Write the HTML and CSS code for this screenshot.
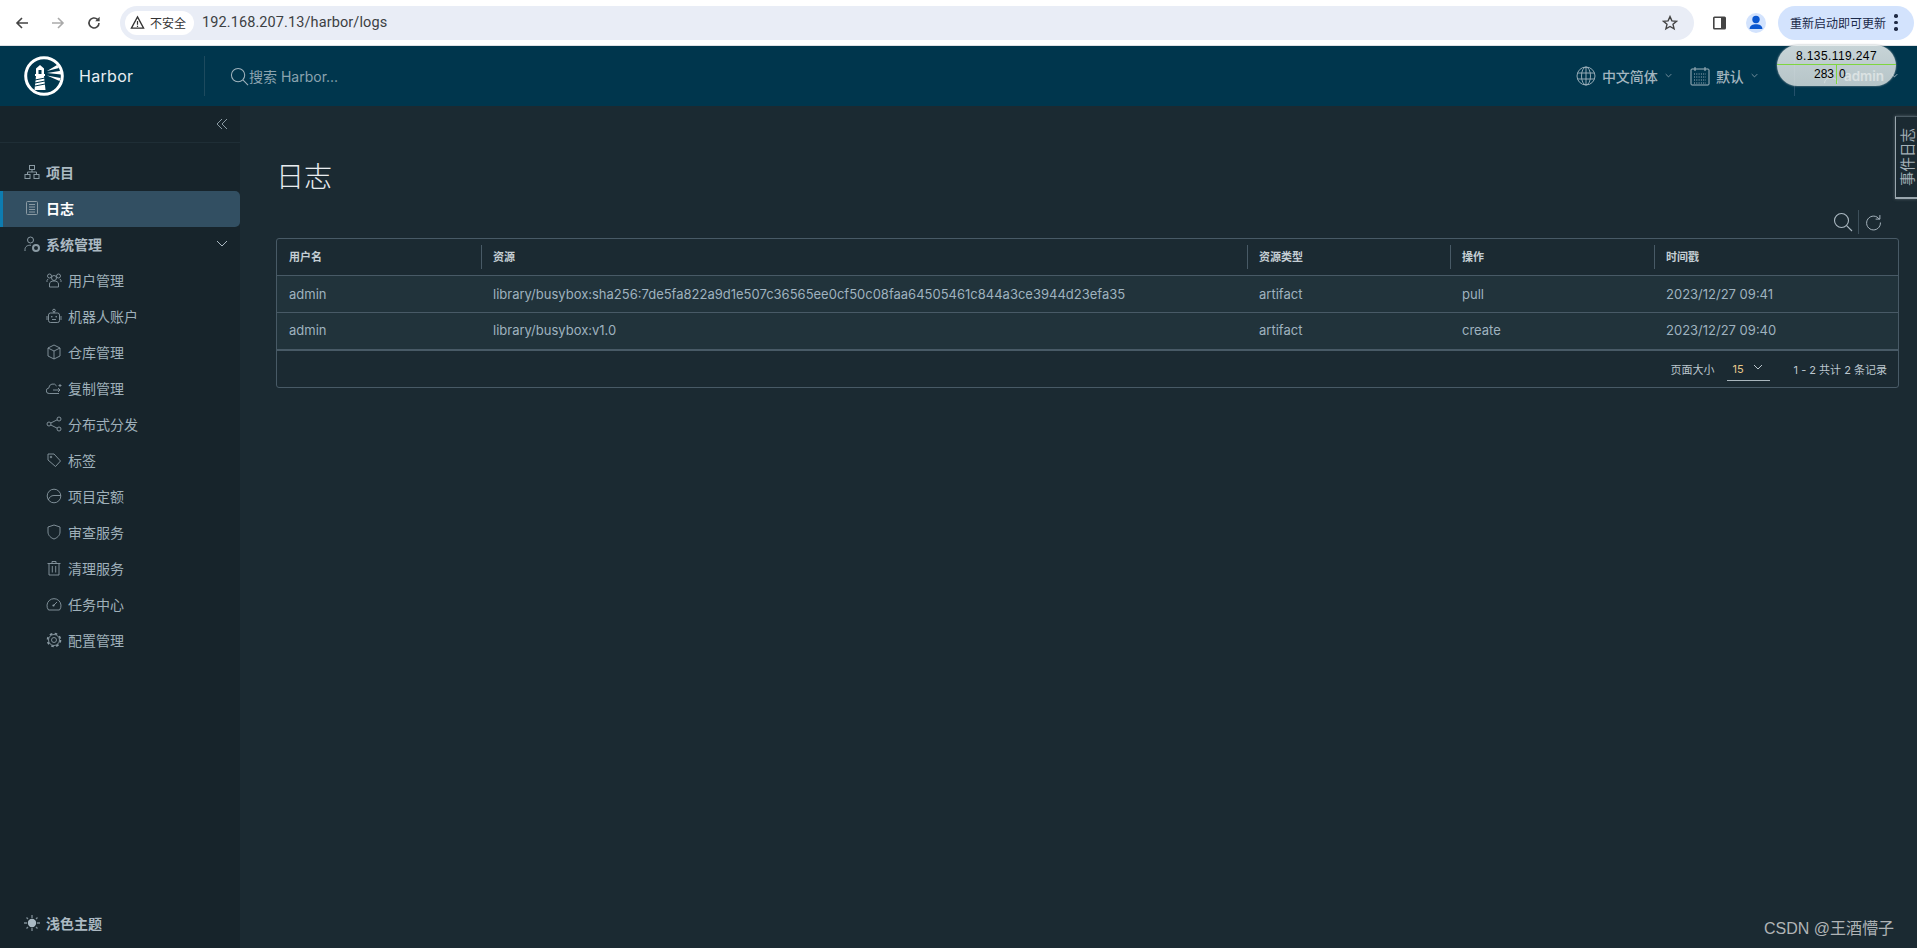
FILE: index.html
```html
<!DOCTYPE html>
<html lang="zh">
<head>
<meta charset="utf-8">
<title>Harbor</title>
<link rel="stylesheet" href="styles.css">
</head>
<body>
<svg width="0" height="0" class="defs">
<symbol id="chev" viewBox="0 0 10 6"><path d="M1 1l4 4 4-4" fill="none" stroke="currentColor" stroke-width="1"/></symbol>
<symbol id="search" viewBox="0 0 20 20"><circle cx="8.5" cy="8.5" r="7" fill="none" stroke="currentColor" stroke-width="1.1"/><path d="M13.6 13.6l5.4 5.4" stroke="currentColor" stroke-width="1.1"/></symbol>
</svg>
<div class="chrome">
  <svg class="nav" viewBox="0 0 16 16"><path d="M14 8H3M8 3L3 8l5 5" fill="none" stroke="#444" stroke-width="1.6"/></svg>
  <svg class="nav" viewBox="0 0 16 16"><path d="M2 8h11M8 3l5 5-5 5" fill="none" stroke="#aaa" stroke-width="1.6"/></svg>
  <svg class="nav nav-last" viewBox="0 0 16 16"><path d="M13 8a5 5 0 1 1-1.500-3.600" fill="none" stroke="#444" stroke-width="1.6"/><path d="M13.600 1.800v4.400H9.200z" fill="#444"/></svg>
  <div class="omnibox">
    <span class="chip"><svg class="warn" viewBox="0 0 16 16"><path d="M8 2l6.500 12h-13z" fill="none" stroke="#333" stroke-width="1.4"/><path d="M8 6.500v4M8 11.500v1.300" stroke="#333" stroke-width="1.3"/></svg>不安全</span>
    <span class="url">192.168.207.13/harbor/logs</span>
    <svg class="star" viewBox="0 0 16 16"><path d="M8 1.600l1.900 4.300 4.600.4-3.500 3 1.100 4.600L8 11.500l-4.100 2.400L5 9.300l-3.500-3 4.600-.4z" fill="none" stroke="#444" stroke-width="1.4"/></svg>
  </div>
  <svg class="sidepanel" viewBox="0 0 16 16"><rect x="1" y="1.500" width="13" height="13" rx="1.500" fill="#444"/><rect x="2.600" y="3" width="6.400" height="10" fill="#fff"/></svg>
  <span class="avatar"><svg viewBox="0 0 20 20"><circle cx="10" cy="6.500" r="3.700" fill="#0b57d0"/><path d="M3.600 16c0-3.400 3.200-4.800 6.400-4.800s6.400 1.400 6.400 4.800z" fill="#0b57d0"/></svg></span>
  <span class="update">重新启动即可更新<span class="dots"><i></i><i></i><i></i></span></span>
</div>
<header class="topbar">
  <div class="brand">
    <svg class="logo" viewBox="0 0 40 40">
      <circle cx="20" cy="20" r="18.300" fill="none" stroke="#fff" stroke-width="3"/>
      <path d="M16 9l4 3.500V18h1v2h-1l1.500 14h-11L12 20h-1v-2h1v-5.500z" fill="#fff"/>
      <rect x="14.500" y="14" width="3" height="4" fill="#00364d"/>
      <path d="M11 24l10-2M11 27l10-2M11 30l10-2" stroke="#00364d" stroke-width="1"/>
      <path d="M23 15L33 9l2 3zM23 17l14-2.200v3.700zM23 19.500l13.500 2.500-1 3z" fill="#fff"/>
    </svg>
    <span class="brand-name">Harbor</span>
  </div>
  <div class="global-search"><svg class="search-ico"><use href="#search"/></svg><span>搜索 Harbor...</span></div>
  <div class="top-right">
    <span class="top-item"><svg class="ico-lang" viewBox="0 0 20 20"><g fill="none" stroke="currentColor" stroke-width=".9"><circle cx="10" cy="10" r="9"/><ellipse cx="10" cy="10" rx="4.500" ry="9"/><path d="M10 1v18M1.500 7h17M1.500 13h17"/></g></svg>中文简体<svg class="chev"><use href="#chev"/></svg></span>
    <span class="top-item"><svg class="ico-lang" viewBox="0 0 20 20"><g fill="none" stroke="currentColor" stroke-width="1"><rect x="1" y="3" width="18" height="16" rx="1"/><path d="M5 1v4M15 1v4"/><path d="M4 8h12M4 11h12M4 14h12M4 17h12" stroke-dasharray="1 1.300"/></g></svg>默认<svg class="chev"><use href="#chev"/></svg></span>
    <span class="top-sep"></span>
    <span class="top-item user"><svg class="ico-user" viewBox="0 0 20 20"><g fill="none" stroke="currentColor" stroke-width="1"><circle cx="10" cy="6" r="4"/><path d="M2 19c0-5 4-6.500 8-6.500s8 1.500 8 6.500"/></g></svg>admin<svg class="chev"><use href="#chev"/></svg></span>
  </div>
</header>
<div class="main">
  <aside class="sidebar">
    <div class="collapse"><svg viewBox="0 0 12 12"><path d="M6 1L1 6l5 5M11 1L6 6l5 5" fill="none" stroke="currentColor" stroke-width="1"/></svg></div>
    <nav class="menu">
      <a class="item"><svg class="ic" viewBox="0 0 16 16"><g fill="none" stroke="currentColor"><rect x="5.500" y="1.500" width="5" height="4"/><rect x="1" y="10.500" width="5" height="4"/><rect x="10" y="10.500" width="5" height="4"/><path d="M8 5.500V8M3.500 10.500V8h9v2.500"/></g></svg>项目</a>
      <a class="item active"><svg class="ic" viewBox="0 0 16 16"><g fill="none" stroke="currentColor"><rect x="2.500" y="1.500" width="11" height="13" rx="1"/><path d="M5 4.500h6M5 7h6M5 9.500h6M5 12h6"/></g></svg>日志</a>
      <a class="item"><svg class="ic" viewBox="0 0 16 16"><g fill="none" stroke="currentColor"><circle cx="6.500" cy="4" r="3"/><path d="M1 15v-1.500c0-3 2.500-4.500 6-4.300"/></g><circle cx="12" cy="12" r="3" fill="none" stroke="currentColor" stroke-width="2"/></svg>系统管理<svg class="chev-down" viewBox="0 0 12 8"><path d="M1 1l5 5 5-5" fill="none" stroke="currentColor" stroke-width="1"/></svg></a>
      <a class="item sub"><svg class="ic" viewBox="0 0 16 16"><g fill="none" stroke="currentColor" stroke-width=".9"><circle cx="8" cy="6" r="2.500"/><circle cx="3.500" cy="4" r="2"/><circle cx="12.500" cy="4" r="2"/><path d="M3.500 15v-3c0-2 2-3 4.500-3s4.500 1 4.500 3v3zM1 10V8.500L2 7M15 10V8.500L14 7"/></g></svg>用户管理</a>
      <a class="item sub"><svg class="ic" viewBox="0 0 16 16"><g fill="none" stroke="currentColor" stroke-width=".9"><rect x="2.500" y="5" width="11" height="9.500" rx="2"/><circle cx="8" cy="2.500" r="1.300"/><path d="M8 3.800V5M1 8v4M15 8v4M6 11.500h4"/></g><circle cx="5.800" cy="8.800" r=".8" fill="currentColor"/><circle cx="10.200" cy="8.800" r=".8" fill="currentColor"/></svg>机器人账户</a>
      <a class="item sub"><svg class="ic" viewBox="0 0 16 16"><g fill="none" stroke="currentColor" stroke-width=".9"><path d="M8 1l6 3v8l-6 3-6-3V4z"/><path d="M2 4l6 3 6-3M8 7v8"/></g></svg>仓库管理</a>
      <a class="item sub"><svg class="ic" viewBox="0 0 16 16"><g fill="none" stroke="currentColor" stroke-width=".9"><path d="M13 13.500H3.200A2.700 2.700 0 0 1 2.800 8.100 4.200 4.200 0 0 1 10.600 6"/><path d="M7 10h7M12 8l2 2-2 2M15.500 5.500h-3M14 4v3"/></g></svg>复制管理</a>
      <a class="item sub"><svg class="ic" viewBox="0 0 16 16"><g fill="none" stroke="currentColor" stroke-width=".9"><circle cx="3" cy="8" r="2"/><circle cx="13" cy="3" r="2"/><circle cx="13" cy="13" r="2"/><path d="M4.800 7l6.400-3.200M4.800 9l6.400 3.200"/></g></svg>分布式分发</a>
      <a class="item sub"><svg class="ic" viewBox="0 0 16 16"><g fill="none" stroke="currentColor" stroke-width=".9"><path d="M2 2h6l6.500 7-5 5.500L2 8z"/><circle cx="5" cy="5" r=".8"/></g></svg>标签</a>
      <a class="item sub"><svg class="ic" viewBox="0 0 16 16"><g fill="none" stroke="currentColor" stroke-width=".9"><circle cx="8" cy="8" r="6.800"/><path d="M2.200 12C3.500 9 5 7.500 8 7.500h6.800"/></g></svg>项目定额</a>
      <a class="item sub"><svg class="ic" viewBox="0 0 16 16"><path d="M8 1l6 2v5c0 3.500-3 6-6 7-3-1-6-3.500-6-7V3z" fill="none" stroke="currentColor" stroke-width=".9"/></svg>审查服务</a>
      <a class="item sub"><svg class="ic" viewBox="0 0 16 16"><g fill="none" stroke="currentColor" stroke-width=".9"><path d="M1.500 3.500h13M6 3.500V1.500h4v2M3 3.500V15h10V3.500M6.300 6v6.500M9.700 6v6.500"/></g></svg>清理服务</a>
      <a class="item sub"><svg class="ic" viewBox="0 0 16 16"><g fill="none" stroke="currentColor" stroke-width=".9"><path d="M2.500 14A7 7 0 1 1 13.500 14z"/><path d="M7.500 9.500L11 6"/></g><circle cx="7.500" cy="9.500" r="1.100" fill="currentColor"/></svg>任务中心</a>
      <a class="item sub"><svg class="ic" viewBox="0 0 16 16"><g fill="none" stroke="currentColor"><circle cx="8" cy="8" r="2.500" stroke-width=".9"/><circle cx="8" cy="8" r="5.500" stroke-width=".9"/><circle cx="8" cy="8" r="6.500" stroke-width="1.600" stroke-dasharray="2.600 2.500"/></g></svg>配置管理</a>
    </nav>
    <a class="item theme"><svg class="ic" viewBox="0 0 16 16"><circle cx="8" cy="8" r="4.200" fill="#a9b9c3"/><path d="M8 0v3M8 13v3M0 8h3M13 8h3M2.500 2.500l1.500 1.500M12 12l1.500 1.500M2.500 13.500L4 12M12 4l1.500-1.500" stroke="#7d8c95" stroke-width="1.300"/></svg>浅色主题</a>
  </aside>
  <main class="content">
    <h1 class="title">日志</h1>
    <div class="tools">
      <svg class="tool-search"><use href="#search"/></svg>
      <span class="tool-sep"></span>
      <svg class="tool-refresh" viewBox="0 0 16 16"><path d="M13.500 5A6.500 6.500 0 1 0 14.500 8" fill="none" stroke="currentColor" stroke-width=".9"/><path d="M10 4.800h4V1" fill="none" stroke="currentColor" stroke-width=".9"/></svg>
    </div>
    <section class="grid">
      <div class="row head"><span>用户名</span><span>资源</span><span>资源类型</span><span>操作</span><span>时间戳</span></div>
      <div class="row body"><span>admin</span><span>library/busybox:sha256:7de5fa822a9d1e507c36565ee0cf50c08faa64505461c844a3ce3944d23efa35</span><span>artifact</span><span>pull</span><span>2023/12/27 09:41</span></div>
      <div class="row body last"><span>admin</span><span>library/busybox:v1.0</span><span>artifact</span><span>create</span><span>2023/12/27 09:40</span></div>
      <div class="foot"><span>页面大小</span><span class="select">15<svg class="chev"><use href="#chev"/></svg></span><span class="count">1 - 2 共计 2 条记录</span></div>
    </section>
  </main>
</div>
<div class="speed">
  <div class="speed-top">8.135.119.247</div>
  <div class="speed-bottom"><span>283</span><span>0</span></div>
</div>
<div class="event-tab"><span>事件日志</span></div>
<div class="watermark">CSDN @王酒懵子</div>
</body>
</html>
```
FILE: styles.css
```css
* { box-sizing: border-box; }
html, body { margin: 0; height: 100%; overflow: hidden; }
body {
  width: 1917px; height: 948px; display: flex; flex-direction: column;
  background: #1b2a32; color: #acbac3;
  font-family: Inter, "Noto Sans CJK SC", sans-serif; font-size: 13px;
}
.defs { position: absolute; }
.chrome {
  height: 46px; flex: none; display: flex; align-items: center; background: #fff;
  border-bottom: 1px solid #dfe1e5; padding: 0 3px 0 14px;
}
.nav { width: 16px; height: 16px; margin-right: 20px; flex: none; }
.nav-last { margin-right: 18px; }
.omnibox {
  flex: 1; height: 34px; display: flex; align-items: center; background: #e9edf6;
  border-radius: 17px; padding: 0 12px 0 5px;
}
.chip {
  display: flex; align-items: center; gap: 5px; height: 24px; padding: 0 8px 0 5px; background: #fff;
  border-radius: 12px; font: 12px "Noto Sans CJK SC", sans-serif; color: #333;
}
.warn { width: 15px; height: 15px; }
.url { flex: 1; margin-left: 8px; font: 14.500px Roboto, sans-serif; color: #3c4043; letter-spacing: .1px; }
.star { width: 16px; height: 16px; margin-right: 4px; }
.sidepanel { width: 16px; height: 16px; margin-left: 18px; }
.avatar {
  width: 20px; height: 20px; margin: 0 12px 0 18px; border-radius: 50%; background: #d3e3fd; display: flex;
}
.update {
  display: flex; align-items: center; height: 34px; width: 136px; padding-left: 12px; background: #d3e3fd;
  border-radius: 17px; font: 12px "Noto Sans CJK SC", sans-serif; color: #1b2a4a;
}
.dots { display: flex; flex-direction: column; gap: 3px; margin-left: 8px; }
.dots i { width: 3.500px; height: 3.500px; border-radius: 50%; background: #1f2a44; }
.topbar {
  height: 60px; flex: none; display: flex; align-items: center; background: #00364d;
}
.brand { width: 205px; height: 40px; display: flex; align-items: center; padding-left: 24px; border-right: 1px solid #1d4a5e; flex: none; }
.logo { width: 40px; height: 40px; flex: none; }
.brand-name { margin-left: 15px; font-size: 16px; letter-spacing: .3px; color: #e8eef1; }
.global-search { display: flex; align-items: center; margin-left: 25px; color: #8ba3af; font-size: 14px; }
.search-ico { width: 19px; height: 19px; margin-right: 0; color: #9fb3bd; }
.top-right { margin-left: auto; display: flex; align-items: center; padding-right: 19px; color: #a3b5bf; }
.top-item { display: flex; align-items: center; font-size: 14px; font-weight: 500; margin-right: 18px; padding-bottom: 1px; }
.ico-lang { width: 20px; height: 20px; margin-right: 6px; flex: none; }
.ico-user { width: 16px; height: 16px; margin-right: 5px; flex: none; }
.chev { width: 7px; height: 5px; margin-left: 7px; flex: none; }
.top-sep { width: 1px; height: 40px; background: #24506a; margin: 0 28px 0 18px; }
.user { margin-right: 0; color: #e3eaee; font-weight: 600; font-size: 13.500px; }
.main { flex: 1; display: flex; min-height: 0; }
.sidebar { width: 240px; flex: none; background: #17242b; display: flex; flex-direction: column; }
.collapse { height: 37px; flex: none; border-bottom: 1px solid #1f2e36; display: flex; justify-content: flex-end; align-items: center; padding: 0 12px 1px 0; color: #8a9aa3; }
.collapse svg { width: 12px; height: 12px; }
.menu { flex: 1; padding-top: 12px; }
.item {
  display: flex; align-items: center; height: 36px; padding: 0 0 2px 24px; font-size: 14px; font-weight: 600;
  color: #acbac3; position: relative;
}
.ic { width: 16px; height: 16px; margin-right: 6px; flex: none; color: #8a9aa3; }
.item.active { background: #324f62; color: #fff; font-weight: 700; border-radius: 0 5px 5px 0; box-shadow: inset 3px 0 0 #0d7cb0; }
.item.sub { padding-left: 46px; font-weight: 400; color: #9fb0ba; }
.chev-down { width: 12px; height: 8px; margin-left: auto; margin-right: 12px; color: #acbac3; }
.theme { margin-bottom: 6px; }
.content { flex: 1; padding: 53px 18px 0 36px; min-width: 0; }
.title { margin: 0; font-size: 28px; font-weight: 300; line-height: 36px; color: #e9edf0; height: 36px; }
.tools { height: 32px; margin-top: 11px; display: flex; align-items: center; justify-content: flex-end; padding-right: 17px; color: #acbac3; }
.tool-search { width: 20px; height: 20px; }
.tool-sep { width: 1px; height: 24px; background: #3d4f5a; margin: 0 6px 0 5px; }
.tool-refresh { width: 17px; height: 17px; }
.grid { height: 150px; border: 1px solid #485a66; border-radius: 3px; }
.row { display: grid; grid-template-columns: 204px 766px 203px 204px 1fr; align-items: center; }
.row span { padding-left: 12px; }
.head { height: 37px; font-size: 11px; font-weight: 600; color: #c4ced4; border-bottom: 1px solid #485a66; }
.head span { height: 24px; line-height: 24px; }
.head span + span { border-left: 1px solid #485a66; padding-left: 11px; }
.body { height: 37px; background: #21333b; color: #9fb2bf; font-size: 13px; border-bottom: 1px solid #485a66; padding-bottom: 1px; }
.last { height: 38px; border-bottom-width: 2px; padding-bottom: 2px; }
.foot { height: 36px; display: flex; align-items: center; justify-content: flex-end; padding-right: 11px; font-size: 11px; color: #bcc7ce; }
.select { display: flex; align-items: center; justify-content: space-between; width: 43px; height: 24px; margin: 0 24px 0 12px; padding: 0 6px; border-bottom: 1px solid #a9b6bd; color: #e8c98a; font-size: 11px; }
.select .chev { width: 10px; height: 6px; color: #bcc7ce; margin-right: 1px; margin-top: -3px; }
.speed {
  position: absolute; left: 1777px; top: 45px; width: 119px; height: 41px; border-radius: 20.500px;
  background: linear-gradient(rgba(232, 238, 238, .86), rgba(212, 220, 220, .86)); box-shadow: 0 0 2px #9aa4a9; overflow: hidden;
  font: 12px/18px "Liberation Sans", sans-serif; color: #000; text-align: center;
}
.speed-top { height: 20px; padding-top: 2px; border-bottom: 1px solid #7fd63f; letter-spacing: .4px; }
.speed-bottom { display: grid; grid-template-columns: 60px 59px; height: 19px; line-height: 19px; }
.speed-bottom span:first-child { text-align: right; padding-right: 2px; border-right: 1px solid #7fd63f; }
.speed-bottom span:last-child { text-align: left; padding-left: 2px; }
.event-tab {
  position: absolute; left: 1895px; top: 116px; width: 22px; height: 83px; background: #1b2a32;
  border-left: 1px solid #9aa7ae; border-bottom: 2px solid #9aa7ae; border-top: 1px solid #4a5a63;
  display: flex; align-items: center; justify-content: center;
  font: 14.500px/20px "Noto Sans CJK SC", sans-serif; color: #a5b1b8; box-shadow: 0 0 3px #55636b;
}
.event-tab span { display: block; flex: none; white-space: nowrap; transform: rotate(-90deg); }
.watermark {
  position: absolute; left: 1764px; top: 919px; font: 16px/20px "Liberation Sans", "Noto Sans CJK SC", sans-serif; color: #b0b4b6; white-space: nowrap;
}
```
